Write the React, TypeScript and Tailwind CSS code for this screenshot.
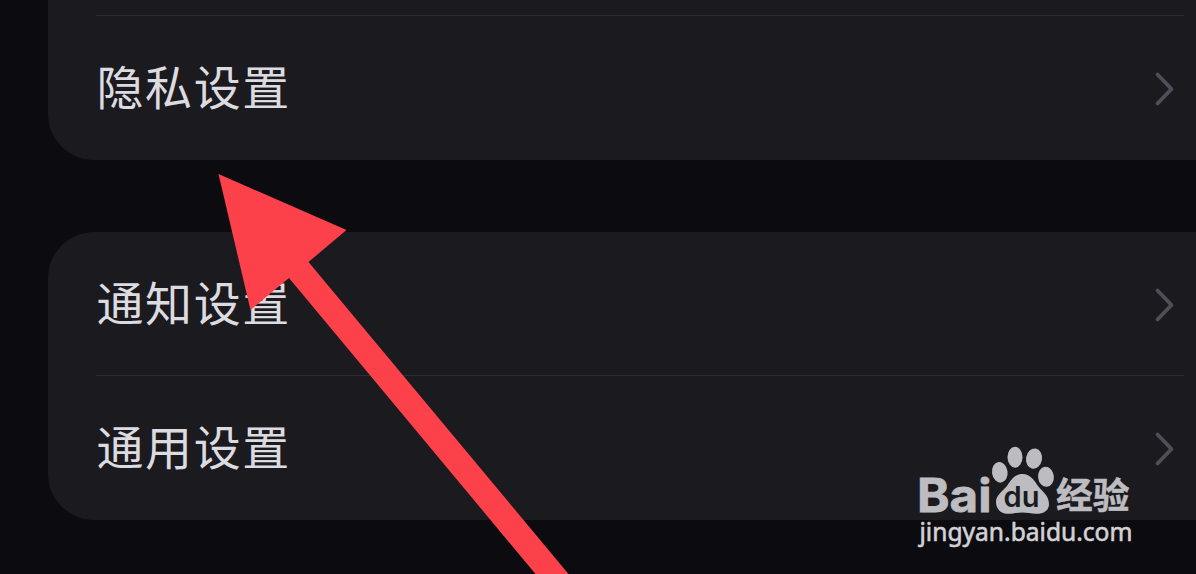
function Chevron() {
  return (
    <svg className="mt-[2px] h-9 w-6 shrink-0" viewBox="0 0 24 36" fill="none">
      <path
        d="M5.5 3.5 L19.5 18 L5.5 32.5"
        stroke="#504f59"
        strokeWidth="3.8"
        strokeLinecap="round"
        strokeLinejoin="round"
      />
    </svg>
  );
}

function SettingsRow({ label }: { label: string }) {
  return (
    <div className="flex h-36 items-center justify-between pr-5 pl-[48.5px]">
      <span className="pb-[7px] text-[47px] leading-none tracking-[1.6px] whitespace-nowrap text-[#dcdbe0]">
        {label}
      </span>
      <Chevron />
    </div>
  );
}

function Divider() {
  return <div className="-mt-px mr-3 ml-12 h-px bg-[#2d2d31]"></div>;
}

function Arrow() {
  return (
    <svg
      className="pointer-events-none absolute inset-0"
      width="1196"
      height="574"
      viewBox="0 0 1196 574"
    >
      <path
        d="M218.5 174 L346.5 230 L308.5 262 L568.5 574 L535.5 574 L289 278 L250.5 310 Z"
        fill="#fd414b"
      />
    </svg>
  );
}

function Watermark() {
  return (
    <svg
      className="pointer-events-none absolute top-[436px] left-[908px]"
      width="240"
      height="120"
      viewBox="908 436 240 120"
      fill="#bdbcc0"
    >
      <text
        x="917"
        y="512"
        fontSize="46.5"
        fontWeight="700"
        fontFamily="Inter, sans-serif"
        textLength="74.5"
        lengthAdjust="spacingAndGlyphs"
        stroke="#bdbcc0"
        strokeWidth="0.8"
      >
        Bai
      </text>
      <ellipse cx="999.8" cy="472.3" rx="7.8" ry="10.4" transform="rotate(-8 999.8 472.3)" />
      <ellipse cx="1015" cy="457.2" rx="7.5" ry="10.5" />
      <ellipse cx="1034" cy="458.6" rx="8" ry="10.2" transform="rotate(10 1034 458.6)" />
      <ellipse cx="1046" cy="476.8" rx="7.9" ry="10" transform="rotate(-6 1046 476.8)" />
      <path d="M1022.5 474 C1030 474 1034 480 1038 486 C1043 492 1049 496 1049 504 C1049 511 1043 514 1036 513.8 C1031 513.6 1027 512.5 1022.5 512.5 C1017 512.5 1013 513.8 1008 513.8 C1001 513.8 996 509 996 502 C996 495 1002 492 1007 486 C1011 480 1015 474 1022.5 474 Z" />
      <text
        x="1003.5"
        y="507"
        fontSize="28"
        fontWeight="600"
        fontFamily="Inter, sans-serif"
        fill="#1b1a1e"
        textLength="36"
        lengthAdjust="spacingAndGlyphs"
      >
        du
      </text>
      <text
        x="1056"
        y="508.8"
        fontSize="36.5"
        fontWeight="700"
        fontFamily="'Noto Sans CJK SC', sans-serif"
        textLength="73.5"
        lengthAdjust="spacingAndGlyphs"
        stroke="#bdbcc0"
        strokeWidth="0.5"
      >
        经验
      </text>
      <text
        x="919.5"
        y="541"
        fontSize="25"
        fontFamily="'Noto Sans', sans-serif"
        fill="#d2d1d5"
        stroke="#d2d1d5"
        strokeWidth="0.6"
        textLength="213"
        lengthAdjust="spacingAndGlyphs"
      >
        jingyan.baidu.com
      </text>
    </svg>
  );
}

export default function App() {
  return (
    <div className="relative h-[574px] w-[1196px] overflow-hidden bg-[#0c0b0f] font-['Noto_Sans_CJK_SC',sans-serif]">
      <div className="flex flex-col gap-[72px] pl-12">
        <div className="rounded-bl-[46px] bg-[#1b1a1e] pt-4">
          <Divider />
          <SettingsRow label="隐私设置" />
        </div>
        <div className="rounded-l-[46px] bg-[#1b1a1e]">
          <SettingsRow label="通知设置" />
          <Divider />
          <SettingsRow label="通用设置" />
        </div>
      </div>
      <Arrow />
      <Watermark />
    </div>
  );
}
